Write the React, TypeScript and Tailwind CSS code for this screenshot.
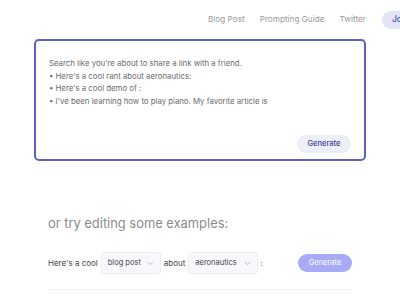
import React from 'react';
import { ChevronDown } from 'lucide-react';

const navLinks = ['Blog Post', 'Prompting Guide', 'Twitter'];

const examplePrompts = [
  "Search like you're about to share a link with a friend.",
  "• Here's a cool rant about aeronautics:",
  "• Here's a cool demo of :",
  "• I've been learning how to play piano. My favorite article is",
];

const SelectBox: React.FC<{ value: string; width: string }> = ({ value, width }) => (
  <div
    className={`flex items-center justify-between h-[22px] ${width} pl-[6px] pr-[5px] bg-[#f8f8fc] border border-[#ececf4] rounded-[3px] shrink-0`}
  >
    <span className="text-[7.5px] text-[#444]">{value}</span>
    <ChevronDown className="w-[9px] h-[9px] text-[#888]" strokeWidth={1.5} />
  </div>
);

const App: React.FC = () => {
  return (
    <div className="w-[400px] h-[300px] bg-white overflow-hidden font-['Inter','Liberation_Sans',sans-serif]">
      {/* header */}
      <div className="h-[39px] flex items-center relative">
        <span className="absolute left-[-3px] top-[15px] text-[9px] text-[#ccc]">‹</span>
        <nav className="ml-[208px] flex items-center gap-[15px] whitespace-nowrap">
          {navLinks.map((link) => (
            <span key={link} className="text-[8.2px] text-[#9a9a9a]">
              {link}
            </span>
          ))}
          <span className="ml-[1px] h-[18px] w-[40px] shrink-0 rounded-full bg-[#e3e4f6] pl-[10px] flex items-center text-[8.5px] text-[#4b50b8] font-medium">
            Join
          </span>
        </nav>
      </div>
      <div className="mx-[35px] h-px bg-[#f0f0f8]" />

      {/* prompt box */}
      <div className="ml-[34px] w-[332px] h-[122px] -mt-px border-2 border-[#5c61c4] rounded-[5px] flex flex-col px-[13px] pt-[16px] pb-[6px]">
        <div className="text-[7.8px] leading-[12.6px] text-[#6b6b6b]">
          {examplePrompts.map((line) => (
            <div key={line}>{line}</div>
          ))}
        </div>
        <div className="mt-auto flex justify-end">
          <button className="h-[18px] w-[54px] rounded-full bg-[#eceef8] text-[7.5px] text-[#3c419c] font-medium">
            Generate
          </button>
        </div>
      </div>

      {/* examples */}
      <div className="mx-[48px] mt-[55px]">
        <h2 className="text-[12.9px] text-[#8c8c8c] leading-[16px]">or try editing some examples:</h2>
        <div className="mt-[20px] flex items-center">
          <span className="text-[8px] text-[#444] mr-[3px]">Here's a cool</span>
          <SelectBox value="blog post" width="w-[60px]" />
          <span className="text-[8px] text-[#444] mx-[3px]">about</span>
          <SelectBox value="aeronautics" width="w-[70px]" />
          <span className="text-[8px] text-[#666] ml-[2px]">:</span>
          <button className="ml-auto h-[18px] w-[54px] rounded-full bg-[#a7aaf5] text-[7.5px] text-white">
            Generate
          </button>
        </div>
        <div className="mt-[15px] h-px bg-[#f0f0f4]" />
      </div>
    </div>
  );
};

export default App;
